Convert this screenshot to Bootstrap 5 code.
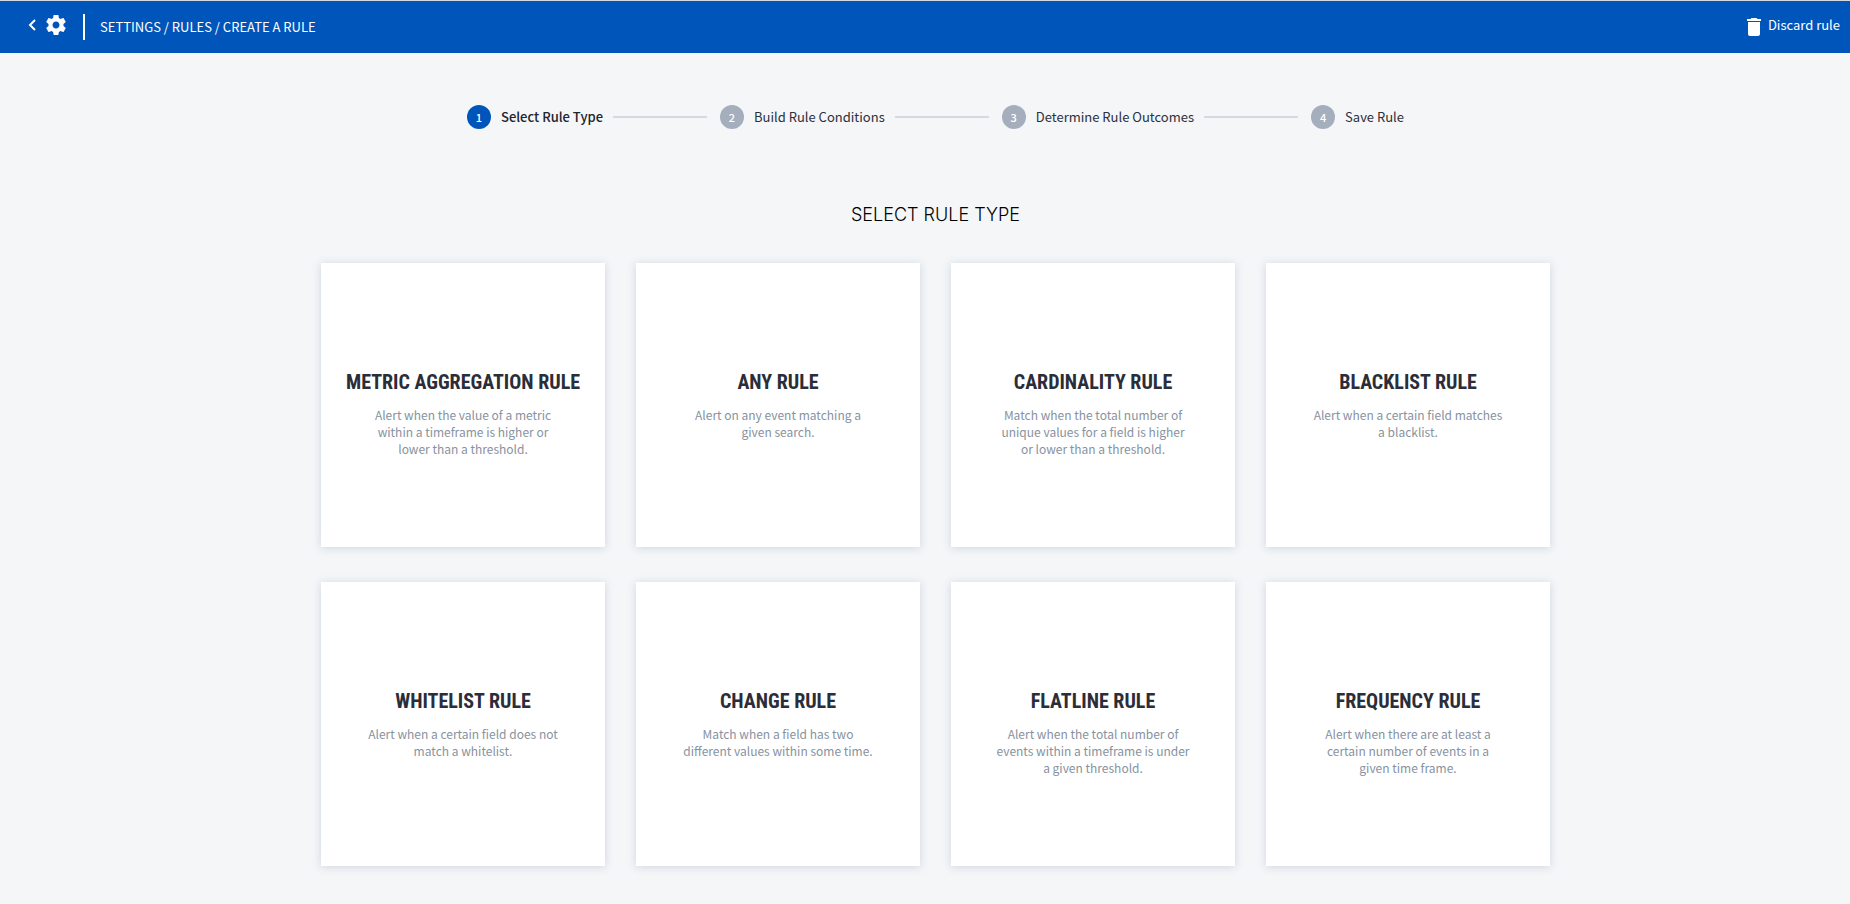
<!DOCTYPE html>
<html lang="en">
<head>
<meta charset="utf-8">
<meta name="viewport" content="width=device-width, initial-scale=1">
<title>Create a rule</title>
<link href="https://cdn.jsdelivr.net/npm/bootstrap@5.3.0/dist/css/bootstrap.min.css" rel="stylesheet">
<style>
  body { background: #f4f6f8; color: #2d2f3b; font-family: "Noto Sans CJK JP", "Noto Sans", sans-serif; font-size: 13px; line-height: 20px; }
  .topbar { background: #0055bb; border-top: 1px solid #d5dae0; height: 53px; padding: 0 10px 0 27px; }
  .topbar a, .topbar button, .crumbs { color: #fff; }
  .topbar-rule { width: 2px; height: 26px; background: #fff; margin: 0 15px; }
  .discard { font-size: 13px; line-height: 20px; gap: 2px; }
  main { padding-left: 21px; }
  .steps { padding-top: 52px; gap: 13px; }
  .steps li { gap: 10px; }
  .step-num { width: 24px; height: 24px; background: #a5aebd; color: #fff; font-size: 11px; font-weight: 500; }
  .step-line { width: 94px; height: 2px; background: #d4dae1; }
  .active .step-num { background: #0055bb; }
  .active .step-label { font-weight: 500; color: #22242e; }
  .page-title { font-family: Inter, sans-serif; font-size: 18px; line-height: 24px; font-weight: 300; color: #000; margin: 74px 0 36px; }
  .rules { max-width: 1229px; column-gap: 31px; row-gap: 35px; display: grid; grid-template-columns: repeat(auto-fit, minmax(260px, 1fr)); padding-bottom: 38px; }
  .rule-card { aspect-ratio: 1; background: #fff; box-shadow: 0 1px 8px rgba(120, 140, 165, .3); padding: 104px 16px 0; }
  .rule-card h2 { font-family: "Roboto Condensed", "Liberation Sans Narrow", sans-serif; font-size: 20px; line-height: 30px; font-weight: 700; color: #2b2d38; margin: 0 0 9px; white-space: nowrap; }
  .rule-card p { font-size: 12px; line-height: 17px; color: #8792a1; max-width: 194px; }
</style>
</head>
<body>
<header class="topbar d-flex align-items-center justify-content-between">
  <div class="d-flex align-items-center">
    <a href="#" aria-label="Back" class="d-flex mb-1"><svg width="9" height="14" viewBox="0 0 9 14" fill="none" stroke="#fff" stroke-width="2"><path d="M8 2 3 7l5 5"/></svg></a>
    <a href="#" aria-label="Settings" class="d-flex ms-2 mb-1"><svg width="24" height="24" viewBox="0 0 24 24" fill="#fff"><path d="M19.43 12.98c.04-.32.07-.64.07-.98s-.03-.66-.07-.98l2.11-1.65c.19-.15.24-.42.12-.64l-2-3.46c-.12-.22-.39-.3-.61-.22l-2.49 1c-.52-.4-1.08-.73-1.69-.98l-.38-2.65C14.46 2.18 14.25 2 14 2h-4c-.25 0-.46.18-.49.42l-.38 2.65c-.61.25-1.17.59-1.69.98l-2.49-1c-.23-.09-.49 0-.61.22l-2 3.46c-.13.22-.07.49.12.64l2.11 1.65c-.04.32-.07.65-.07.98s.03.66.07.98l-2.11 1.65c-.19.15-.24.42-.12.64l2 3.46c.12.22.39.3.61.22l2.49-1c.52.4 1.08.73 1.69.98l.38 2.65c.03.24.24.42.49.42h4c.25 0 .46-.18.49-.42l.38-2.65c.61-.25 1.17-.59 1.69-.98l2.49 1c.23.09.49 0 .61-.22l2-3.46c.12-.22.07-.49-.12-.64l-2.11-1.65zM12 15.5c-1.93 0-3.5-1.57-3.5-3.5s1.57-3.5 3.5-3.5 3.5 1.57 3.5 3.5-1.57 3.5-3.5 3.5z"/></svg></a>
    <div class="topbar-rule"></div>
    <nav aria-label="breadcrumb" class="crumbs"><a href="#" class="text-decoration-none">SETTINGS</a> / <a href="#" class="text-decoration-none">RULES</a> / <a href="#" class="text-decoration-none" aria-current="page">CREATE A RULE</a></nav>
  </div>
  <button type="button" class="discard btn p-0 border-0 d-flex align-items-center"><svg width="24" height="24" viewBox="0 0 24 24" fill="#fff"><path d="M6 19c0 1.100.9 2 2 2h8c1.100 0 2-.9 2-2V7H6v12zM19 4h-3.500l-1-1h-5l-1 1H5v2h14V4z"/></svg><span class="pb-1">Discard rule</span></button>
</header>
<main>
  <ol class="steps list-unstyled d-flex flex-wrap justify-content-center mb-0">
    <li class="active d-flex align-items-center" aria-current="step"><span class="step-num rounded-circle d-flex align-items-center justify-content-center">1</span><span class="step-label">Select Rule Type</span><span class="step-line"></span></li>
    <li class="d-flex align-items-center"><span class="step-num rounded-circle d-flex align-items-center justify-content-center">2</span><span class="step-label">Build Rule Conditions</span><span class="step-line"></span></li>
    <li class="d-flex align-items-center"><span class="step-num rounded-circle d-flex align-items-center justify-content-center">3</span><span class="step-label">Determine Rule Outcomes</span><span class="step-line"></span></li>
    <li class="d-flex align-items-center"><span class="step-num rounded-circle d-flex align-items-center justify-content-center">4</span><span class="step-label">Save Rule</span></li>
  </ol>
  <h1 class="page-title text-center">SELECT RULE TYPE</h1>
  <div class="rules mx-auto">
    <a href="#" class="rule-card text-center text-decoration-none"><h2>METRIC AGGREGATION RULE</h2><p class="mx-auto mb-0">Alert when the value of a metric within a timeframe is higher or lower than a threshold.</p></a>
    <a href="#" class="rule-card text-center text-decoration-none"><h2>ANY RULE</h2><p class="mx-auto mb-0">Alert on any event matching a given search.</p></a>
    <a href="#" class="rule-card text-center text-decoration-none"><h2>CARDINALITY RULE</h2><p class="mx-auto mb-0">Match when the total number of unique values for a field is higher or lower than a threshold.</p></a>
    <a href="#" class="rule-card text-center text-decoration-none"><h2>BLACKLIST RULE</h2><p class="mx-auto mb-0">Alert when a certain field matches a blacklist.</p></a>
    <a href="#" class="rule-card text-center text-decoration-none"><h2>WHITELIST RULE</h2><p class="mx-auto mb-0">Alert when a certain field does not match a whitelist.</p></a>
    <a href="#" class="rule-card text-center text-decoration-none"><h2>CHANGE RULE</h2><p class="mx-auto mb-0">Match when a field has two different values within some time.</p></a>
    <a href="#" class="rule-card text-center text-decoration-none"><h2>FLATLINE RULE</h2><p class="mx-auto mb-0">Alert when the total number of events within a timeframe is under a given threshold.</p></a>
    <a href="#" class="rule-card text-center text-decoration-none"><h2>FREQUENCY RULE</h2><p class="mx-auto mb-0">Alert when there are at least a certain number of events in a given time frame.</p></a>
  </div>
</main>
<script src="https://cdn.jsdelivr.net/npm/bootstrap@5.3.0/dist/js/bootstrap.bundle.min.js"></script>
</body>
</html>
